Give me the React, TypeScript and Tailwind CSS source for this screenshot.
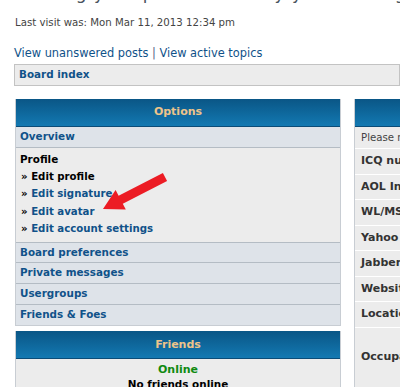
import React from "react";

const font = { fontFamily: '"DejaVu Sans", Verdana, sans-serif' };

const menuRows = ["Board preferences", "Private messages", "Usergroups", "Friends & Foes"];

const profileRows = [
  { label: "Edit profile", active: true },
  { label: "Edit signature", active: false },
  { label: "Edit avatar", active: false },
  { label: "Edit account settings", active: false },
];

const fieldRows = ["ICQ number:", "AOL Instant Messenger:", "WL/MSN Messenger:", "Yahoo Messenger:", "Jabber address:", "Website:", "Location:"];

function PanelHeader({ title }: { title: string }) {
  return (
    <div className="h-[28px] bg-gradient-to-b from-[#0a5686] to-[#1379b2] flex items-center justify-center border-b border-[#0a4c78]">
      <span className="text-[11px] font-bold text-[#edc48a]">{title}</span>
    </div>
  );
}

export default function App() {
  return (
    <div className="relative w-[400px] h-[387px] overflow-hidden bg-white text-[#333]" style={font}>
      {/* cut-off page title */}
      <div className="h-[4px] overflow-hidden">
        <h2 className="-mt-[19px] ml-[14px] text-[17px] leading-[24px] text-[#4a5460] whitespace-nowrap tracking-[1px]">
          Viewing your profile - Modify your settings
        </h2>
      </div>

      <div className="pl-[14px]">
        <p className="mt-[12px] ml-[1px] text-[10.2px] text-[#444] leading-[14px] whitespace-nowrap">
          Last visit was: Mon Mar 11, 2013 12:34 pm
        </p>

        <p className="mt-[15px] text-[11.4px] leading-[16px] text-[#105289] whitespace-nowrap">
          View unanswered posts <span className="text-[#536482]">|</span> View active topics
        </p>

        <div className="mt-[3px] h-[22px] bg-[#ececec] border border-[#c3c3c3] flex items-center pl-[4px]">
          <span className="text-[10.4px] font-bold text-[#105289]">Board index</span>
        </div>

        <div className="mt-[13px] flex gap-[13px]">
          {/* left column */}
          <div className="w-[326px] shrink-0 ml-[1px] flex flex-col gap-[5px]">
            <div className="border border-[#c8cdd3] border-t-0">
              <PanelHeader title="Options" />
              <div className="h-[21px] bg-[#dee3e9] border-b border-[#b4bcc4] flex items-center pl-[4px]">
                <span className="text-[10.4px] font-bold text-[#105289]">Overview</span>
              </div>
              <div className="bg-[#ececec] pt-[3px] pb-[4px] pl-[4px] border-b border-[#b4bcc4]">
                <p className="text-[10.4px] font-bold text-black leading-[17px]">Profile</p>
                {profileRows.map((r) => (
                  <p key={r.label} className="text-[10.2px] font-bold leading-[17.4px] pl-[1px]">
                    <span className="text-black">» </span>
                    <span className={r.active ? "text-black" : "text-[#105289]"}>{r.label}</span>
                  </p>
                ))}
              </div>
              {menuRows.map((r, i) => (
                <div
                  key={r}
                  className={`h-[20.7px] bg-[#dee3e9] flex items-center pl-[4px] ${i < menuRows.length - 1 ? "border-b border-[#b4bcc4]" : ""}`}
                >
                  <span className="text-[10.4px] font-bold text-[#105289]">{r}</span>
                </div>
              ))}
            </div>

            <div className="border border-[#c8cdd3] border-t-0">
              <PanelHeader title="Friends" />
              <div className="bg-[#ececec] pt-[3px] h-[60px] text-center">
                <p className="text-[11px] font-bold text-[#108a10] leading-[15px]">Online</p>
                <p className="text-[10.4px] font-bold text-black leading-[15px]">No friends online</p>
              </div>
            </div>
          </div>

          {/* right column */}
          <div className="flex-1 min-w-[300px] border border-[#c8cdd3] border-t-0">
            <PanelHeader title="Edit profile" />
            <div className="h-[22px] bg-[#ececec] border-b border-white flex items-center pl-[6px]">
              <span className="text-[10.2px] text-[#444] whitespace-nowrap">Please note that this information will be viewable</span>
            </div>
            {fieldRows.map((f) => (
              <div key={f} className="h-[25.5px] bg-[#ececec] border-b border-white flex items-center pl-[6px]">
                <span className="text-[11px] font-bold text-[#333] whitespace-nowrap">{f}</span>
              </div>
            ))}
            <div className="h-[60px] bg-[#ececec] flex items-center pl-[6px]">
              <span className="text-[11px] font-bold text-[#333] whitespace-nowrap">Occupation:</span>
            </div>
          </div>
        </div>
      </div>

      {/* red annotation arrow */}
      <svg className="absolute left-0 top-0 pointer-events-none" width="400" height="387">
        <polygon
          points="103,209 125.8,209.4 122.8,203.7 167.1,181 162.9,173 118.6,195.7 115.6,190"
          fill="#ec1c24"
        />
      </svg>
    </div>
  );
}
